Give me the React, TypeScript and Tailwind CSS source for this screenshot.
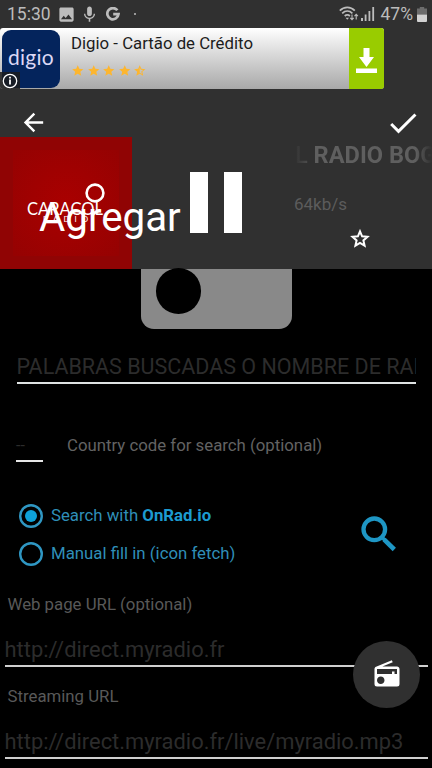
import React from 'react';
import { MdArrowBack, MdCheck, MdImage, MdMic, MdRadio, MdStar, MdStarHalf } from 'react-icons/md';

type FieldProps = {
  label: string;
  hint: string;
};

// --- status bar ---
const WifiIcon = () => (
  <svg width="20" height="16" viewBox="0 0 20 16" fill="none" stroke="currentColor" strokeWidth="1.7">
    <path d="M.8 4.6C5 .2 11.6.2 15.8 4.6M3.2 7.3c3-2.9 7.2-2.9 10.2 0M5.7 10c1.6-1.4 3.6-1.4 5.2 0" />
    <path d="M6.6 11.8h3.4l-1.7 1.9z" fill="currentColor" stroke="none" />
    <path d="M13 8.5v5M11.3 11.8l1.7 1.9 1.7-1.9M17.2 13.6v-5M15.5 10.2l1.7-1.9 1.7 1.9" strokeWidth="1.1" />
  </svg>
);

const SignalIcon = () => (
  <svg width="14" height="14" viewBox="0 0 14 14" fill="currentColor">
    <path d="M0 11h2v3H0zM3.7 7.5h1.8V14H3.7zM7.5 4h1.8v10H7.5zM11.3 0h1.8v14h-1.8z" />
  </svg>
);

const BatteryIcon = () => (
  <svg width="10" height="15" viewBox="0 0 10 15">
    <path d="M2.8 0h4.4v1.6H10V7.6H0V1.6h2.8z" fill="#6c6c6c" />
    <path d="M0 7.6h10V14a1 1 0 0 1-1 1H1a1 1 0 0 1-1-1z" fill="#d2d2d2" />
  </svg>
);

const GoogleIcon = () => (
  <svg width="14" height="14" viewBox="0 0 14 14" fill="none" stroke="currentColor" strokeWidth="2.7">
    <path d="M11.4 3.3A5.6 5.6 0 1 0 12.5 7.2H7.2" />
  </svg>
);

const StatusBar = () => (
  <div className="flex h-7 items-center pl-[7px] pr-[5px] text-[17.5px] text-[#bcbcbc]">
    <span className="w-[53px] leading-7">15:30</span>
    <MdImage size={19} className="-ml-[3px]" />
    <MdMic size={19} className="ml-[4px]" />
    <span className="ml-[7px]">
      <GoogleIcon />
    </span>
    <span className="ml-[14px] h-[2px] w-[2px] rounded-full bg-[#bcbcbc]" />
    <div className="ml-auto flex items-center">
      <WifiIcon />
      <span className="ml-[2px] mr-[6px]">
        <SignalIcon />
      </span>
      <span className="mr-[4px] leading-7">47%</span>
      <BatteryIcon />
    </div>
  </div>
);

// --- ad banner ---
const AdBanner = () => (
  <div className="relative flex h-[61px] w-[384px] overflow-hidden rounded-[3px] bg-linear-to-b from-white to-[#a9a9a9]">
    <div className="ml-[2px] mt-[2px] flex h-[58px] w-[58px] items-center justify-center rounded-[9px] bg-[#04245c]">
      <span className="pb-[5px] font-[Lato] text-[21px] leading-none tracking-[0.3px] text-[#dcd8f5]">digio</span>
    </div>
    <div className="ml-[11px] flex-1">
      <div className="mt-[6px] whitespace-nowrap text-[16.8px] leading-[19px] text-[#1c1c1c]">Digio - Cartão de Crédito</div>
      <div className="mt-[11px] flex gap-[2px] text-[#fdb62f]">
        <MdStar size={13.5} />
        <MdStar size={13.5} />
        <MdStar size={13.5} />
        <MdStar size={13.5} />
        <MdStarHalf size={13.5} />
      </div>
    </div>
    <div className="flex w-[35px] items-center justify-center bg-[#99cc00]">
      <svg width="21" height="25" viewBox="0 0 21 25" fill="#fff" className="mt-[3px]">
        <path d="M7.5 0h6v9H18l-7.5 10L3 9h4.5zM0 20.5h21V25H0z" />
      </svg>
    </div>
    <div className="absolute bottom-0 left-0 flex h-[17px] w-5 items-center justify-center bg-[#1b1b1b]/85">
      <svg width="16" height="16" viewBox="0 0 16 16" fill="none" stroke="#fff">
        <circle cx="8" cy="8" r="6.7" strokeWidth="1.3" />
        <path d="M8 3.7v1.7M8 6.6v5" strokeWidth="1.8" />
      </svg>
    </div>
  </div>
);

// --- player ---
const StationArt = () => (
  <div className="flex h-[132px] w-[132px] shrink-0 bg-[#900404] p-[13px]">
    <div className="relative h-[106px] w-[106px] bg-radial from-[#a90000] to-[#950202] font-[Lato] text-white">
      <svg width="20" height="20" viewBox="0 0 20 20" className="absolute left-[72px] top-[33px]">
        <circle cx="10" cy="10" r="8.4" fill="none" stroke="#fff" strokeWidth="2.6" />
      </svg>
      <span className="absolute left-[14px] top-[51px] text-[16.5px] leading-4">CARACOL</span>
      <span className="absolute left-[30px] top-[65px] text-[8px] leading-[9px] tracking-[5px]">RADIO</span>
    </div>
  </div>
);

const FavStar = () => (
  <svg width="24" height="24" viewBox="0 0 24 24" fill="none" stroke="#fff" strokeWidth="2" className="ml-[54px] mt-[13px]">
    <path d="M12 4.3l2.1 5 5.4.5-4.1 3.6 1.2 5.3-4.6-2.8-4.6 2.8 1.2-5.3-4.1-3.6 5.4-.5z" />
  </svg>
);

const Player = () => (
  <div className="relative flex h-[132px]">
    <StationArt />
    <div className="ml-[58px] mt-[35px] flex gap-4">
      <span className="h-[61px] w-[18px] bg-white" />
      <span className="h-[61px] w-[18px] bg-white" />
    </div>
    <div className="ml-[52px] flex flex-1 flex-col overflow-hidden">
      {/* marquee title, faded at both ends */}
      <div className="mt-[4px] overflow-hidden whitespace-nowrap bg-[linear-gradient(90deg,#303030,#5f5f5f_16%,#5f5f5f_88%,#303030)] bg-clip-text pl-[1px] text-[23.6px] font-bold leading-7 text-transparent">
        <span className="font-medium">L</span> RADIO BOGOTA
      </div>
      <div className="mt-[25px] text-[17px] leading-5 text-[#5c5c5c]">64kb/s</div>
      <FavStar />
    </div>
    <h1 className="absolute left-[39px] top-[57px] text-[40.3px] leading-[47px] text-white">Agregar</h1>
  </div>
);

// --- form ---
const UrlField = ({ label, hint }: FieldProps) => (
  <div className="h-[92px] pl-[4.5px] pr-1">
    <div className="pl-[3px] text-[16.8px] leading-5 text-[#595959]">{label}</div>
    <div className="mt-[20px] h-[33px] whitespace-nowrap border-b-2 border-[#cfcfcf] text-[21.9px] leading-[32px] text-[#2c2c2c]">
      {hint}
    </div>
  </div>
);

const RadioMark = ({ checked }: { checked?: boolean }) => (
  <svg width="24" height="24" viewBox="0 0 24 24" fill="none">
    <circle cx="12" cy="12" r="10.8" stroke="#2f97c3" strokeWidth="2.4" />
    {checked && <circle cx="12" cy="12" r="6" fill="#0ea1d8" />}
  </svg>
);

const App: React.FC = () => {
  return (
    <div className="relative h-[768px] w-[432px] overflow-hidden bg-black font-[Roboto,sans-serif]">
      <header className="h-[269px] bg-[#303030]">
        <StatusBar />
        <AdBanner />
        <div className="flex h-12 items-center justify-between pl-[19px] pr-[11px] pt-[19px] text-white">
          <MdArrowBack size={29} />
          <MdCheck size={36} />
        </div>
        <Player />
      </header>

      <main>
        <div className="ml-[141px] flex h-[60px] w-[151px] rounded-b-[13px] bg-[#898989] pl-[14.5px]">
          <div className="-mt-[1px] h-[45.5px] w-[45.5px] rounded-full bg-black" />
        </div>

        <div className="ml-[16.5px] mr-4 mt-[20px] h-[35px] overflow-hidden whitespace-nowrap border-b-2 border-[#dfe3e3] text-[21.5px] leading-[36px] text-[#2c2c2c]">
          PALABRAS BUSCADAS O NOMBRE DE RADIO
        </div>

        <div className="ml-4 mt-[51px] flex h-[27px]">
          <div className="w-[27px] border-b-2 border-[#e6e6e6] text-[16px] leading-[22px] text-[#2c2c2c]">--</div>
          <div className="ml-6 whitespace-nowrap text-[16.8px] leading-[20px] text-[#636363]">
            Country code for search (optional)
          </div>
        </div>

        <div className="mt-[41px] flex h-[64px] items-center pl-[19px] text-[16.8px] text-[#2f8fb8]">
          <div className="flex flex-col gap-[14px]">
            <div className="flex h-6 items-center gap-2">
              <RadioMark checked />
              <span>
                Search with <b className="text-[#1c9bd0]">OnRad.io</b>
              </span>
            </div>
            <div className="flex h-6 items-center gap-2">
              <RadioMark />
              <span>Manual fill in (icon fetch)</span>
            </div>
          </div>
          <svg width="36" height="36" viewBox="0 0 36 36" fill="none" stroke="#1e96c4" className="mb-[3px] ml-auto mr-[35px]">
            <circle cx="13.3" cy="13.3" r="10.8" strokeWidth="4.3" />
            <path d="M21 21.3l3 3" strokeWidth="3.5" />
            <path d="M23 23.3L33.3 33.5" strokeWidth="4.6" />
          </svg>
        </div>

        <div className="mt-[27px]">
          <UrlField label="Web page URL (optional)" hint="http://direct.myradio.fr" />
          <UrlField label="Streaming URL" hint="http://direct.myradio.fr/live/myradio.mp3" />
        </div>
      </main>

      <button className="absolute left-[353px] top-[641px] flex h-[67px] w-[67px] items-center justify-center rounded-full bg-[#303030] text-white">
        <MdRadio size={30} className="mb-[1px]" />
      </button>
    </div>
  );
};

export default App;
